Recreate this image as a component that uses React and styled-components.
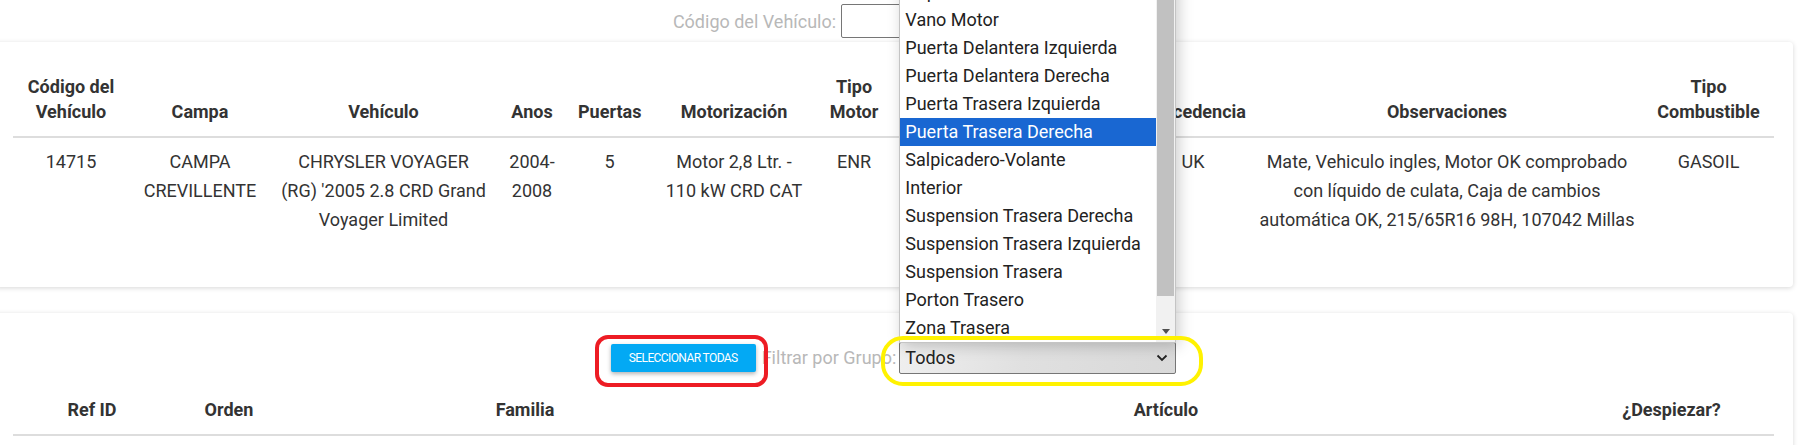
import React from 'react'
import styled, { createGlobalStyle } from 'styled-components'

const GlobalStyle = createGlobalStyle`
  html, body {
    margin: 0;
    background: #fff;
    overflow: hidden;
  }
  body {
    font-family: Roboto, "Liberation Sans", Arial, sans-serif;
    color: #333;
  }
`

const vehicleCols = [116, 142, 225, 72, 83, 166, 74, 120, 124, 116, 392, 131]
const vehicleHeads = [
  'Código del Vehículo', 'Campa', 'Vehículo', 'Anos', 'Puertas', 'Motorización',
  'Tipo Motor', 'Color', 'Kms', 'Procedencia', 'Observaciones', 'Tipo Combustible',
]
const vehicleRow = [
  '14715',
  'CAMPA CREVILLENTE',
  "CHRYSLER VOYAGER (RG) '2005 2.8 CRD Grand Voyager Limited",
  '2004-2008',
  '5',
  'Motor 2,8 Ltr. - 110 kW CRD CAT',
  'ENR',
  'Gris',
  '171000',
  'UK',
  'Mate, Vehiculo ingles, Motor OK comprobado con líquido de culata, Caja de cambios automática OK, 215/65R16 98H, 107042 Millas',
  'GASOIL',
]

const partCols = [158, 116, 476, 806, 205]
const partHeads = ['Ref ID', 'Orden', 'Familia', 'Artículo', '¿Despiezar?']

const groups = [
  'Todos',
  'Frontal',
  'Capó',
  'Vano Motor',
  'Puerta Delantera Izquierda',
  'Puerta Delantera Derecha',
  'Puerta Trasera Izquierda',
  'Puerta Trasera Derecha',
  'Salpicadero-Volante',
  'Interior',
  'Suspension Trasera Derecha',
  'Suspension Trasera Izquierda',
  'Suspension Trasera',
  'Porton Trasero',
  'Zona Trasera',
]
const activeGroup = 'Puerta Trasera Derecha'

const App = () => {
  return (
    <>
      <GlobalStyle />
      <Page>
        <TopBar>
          <Label htmlFor='codigo'>Código del Vehículo:</Label>
          <TextInput id='codigo' type='text' />
        </TopBar>

        <Card $top={20} $bottom={42}>
          <Table>
            <colgroup>
              {vehicleCols.map((w, i) => <Col key={i} $w={w} />)}
            </colgroup>
            <thead>
              <tr>
                {vehicleHeads.map((h) => <Th key={h}>{h}</Th>)}
              </tr>
            </thead>
            <tbody>
              <tr>
                {vehicleRow.map((v, i) => <Td key={i} $px={i === 10 ? 8 : 10}>{v}</Td>)}
              </tr>
            </tbody>
          </Table>
        </Card>

        <Card $top={29} $bottom={20}>
          <Toolbar>
            <Marked>
              <BlueButton type='button'>Seleccionar todas</BlueButton>
              <Ring $color='#ed1c24' $inset='-9px -12px -15px -16px' $radius={13} />
            </Marked>
            <FilterLabel>Filtrar por Grupo:</FilterLabel>
            <Marked>
              <SelectBox>
                <span>Todos</span>
                <svg width='12' height='8' viewBox='0 0 12 8'>
                  <polyline points='1.5,1.5 6,6 10.5,1.5' fill='none' stroke='#222' strokeWidth='1.8' />
                </svg>
              </SelectBox>
              <Listbox>
                <Options>
                  {groups.map((g) => (
                    <Option key={g} $active={g === activeGroup}>{g}</Option>
                  ))}
                </Options>
                <ScrollBar>
                  <Thumb />
                  <ArrowDown />
                </ScrollBar>
              </Listbox>
              <Ring $color='#fff200' $inset='-6px -27px -12px -18px' $radius={22} />
            </Marked>
          </Toolbar>

          <Table>
            <colgroup>
              {partCols.map((w, i) => <Col key={i} $w={w} />)}
            </colgroup>
            <thead>
              <tr>
                {partHeads.map((h) => <Th key={h}>{h}</Th>)}
              </tr>
            </thead>
          </Table>
        </Card>
      </Page>
    </>
  )
}

export default App

const Page = styled.div`
width: 1793px;
`

const TopBar = styled.div`
display: flex;
justify-content: center;
align-items: center;
gap: 5px;
height: 34px;
padding: 4px 0;
`

const Label = styled.label`
font-size: 18px;
color: #b8b8b8;
`

const TextInput = styled.input`
width: 279px;
height: 34px;
box-sizing: border-box;
border: 1px solid #767676;
border-radius: 2px;
background: #fff;
`

const Card = styled.section`
background: #fff;
margin-left: -5px;
padding: ${({$top})=>$top}px 19px ${({$bottom})=>$bottom}px 18px;
border-radius: 4px;
box-shadow: 0 1px 5px rgba(0,0,0,0.16);
& + & {
  margin-top: 26px;
}
`

const Table = styled.table`
width: 100%;
table-layout: fixed;
border-collapse: separate;
border-spacing: 0;
font-size: 18px;
`

const Col = styled.col`
width: ${({$w})=>$w}px;
`

const Th = styled.th`
font-weight: 700;
line-height: 1.4;
padding: 12px 10px;
vertical-align: bottom;
text-align: center;
color: #333;
border-bottom: 2px solid #ddd;
`

const Td = styled.td`
line-height: 1.6;
padding: 10px ${({$px})=>$px}px;
vertical-align: top;
text-align: center;
color: #333;
`

const Toolbar = styled.div`
display: flex;
justify-content: center;
align-items: center;
margin-bottom: 11px;
`

const Marked = styled.div`
position: relative;
display: flex;
`

const Ring = styled.div`
position: absolute;
inset: ${({$inset})=>$inset};
border: 4px solid ${({$color})=>$color};
border-radius: ${({$radius})=>$radius}px;
pointer-events: none;
z-index: 20;
`

const BlueButton = styled.button`
width: 145px;
height: 28px;
padding: 0;
border: 0;
border-radius: 2px;
background: #03a9f4;
color: #fff;
font-family: Roboto, "Liberation Sans", sans-serif;
font-size: 12px;
letter-spacing: -0.6px;
text-transform: uppercase;
box-shadow: 0 2px 4px rgba(0,0,0,0.3);
`

const FilterLabel = styled.span`
margin: 0 3px 0 6px;
font-size: 18px;
color: #b8b8b8;
`

const SelectBox = styled.div`
display: flex;
align-items: center;
justify-content: space-between;
width: 277px;
height: 32px;
box-sizing: border-box;
padding: 0 7px 0 5px;
border: 1px solid #767676;
border-radius: 2px;
background: linear-gradient(100deg, #efefef 0%, #e0e0e0 45%, #d9d9d9 100%);
font-size: 18px;
color: #222;
`

const Listbox = styled.div`
position: absolute;
left: 0;
bottom: calc(100% - 1px);
width: 277px;
box-sizing: border-box;
display: flex;
background: #fff;
border: 1px solid #c4c4c4;
box-shadow: 3px 3px 14px rgba(0,0,0,0.2);
z-index: 10;
`

const Options = styled.ul`
flex: 1;
margin: 0;
padding: 0;
list-style: none;
`

const Option = styled.li`
height: 28px;
line-height: 28px;
padding-left: 5px;
font-size: 18px;
white-space: nowrap;
color: ${({$active})=>$active ? '#fff' : '#222'};
background: ${({$active})=>$active ? '#1967d2' : 'transparent'};
`

const ScrollBar = styled.div`
width: 19px;
flex: none;
display: flex;
flex-direction: column;
background: #f1f1f1;
`

const Thumb = styled.div`
flex: 1;
margin: 0 1px 26px;
background: #c1c1c1;
`

const ArrowDown = styled.div`
height: 20px;
display: flex;
align-items: center;
justify-content: center;
&::before {
  content: "";
  border-left: 4px solid transparent;
  border-right: 4px solid transparent;
  border-top: 5px solid #505050;
}
`
